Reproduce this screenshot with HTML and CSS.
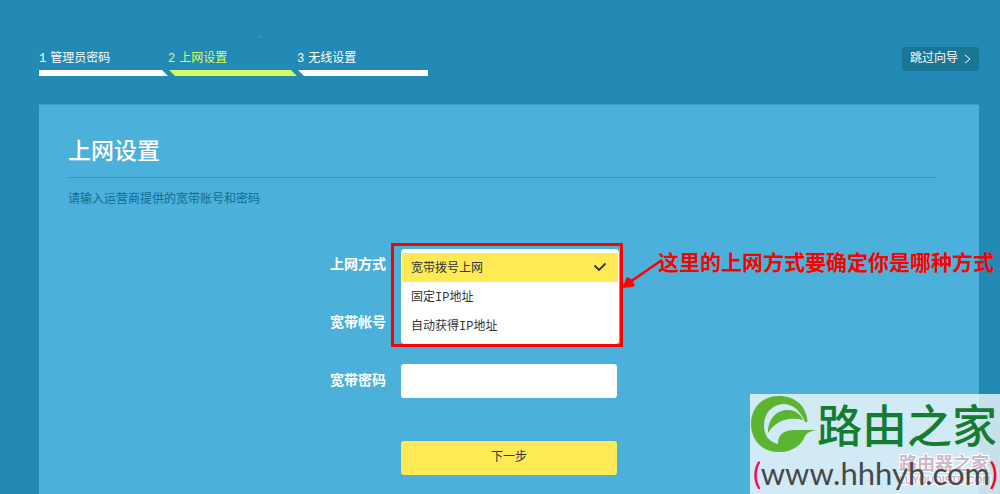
FILE: index.html
```html
<!DOCTYPE html>
<html lang="zh-CN">
<head>
<meta charset="utf-8">
<meta name="viewport" content="width=device-width, initial-scale=1">
<title>上网设置</title>
<link rel="stylesheet" href="styles.css">
</head>
<body>
<div class="page">
  <span class="speck"></span>
  <header class="top">
    <ol class="steps">
      <li class="step"><span class="step-name"><span>1</span><span>管理员密码</span></span><span class="bar bar-first"></span></li>
      <li class="step active" aria-current="step"><span class="step-name"><span>2</span><span>上网设置</span></span><span class="bar"></span></li>
      <li class="step"><span class="step-name"><span>3</span><span>无线设置</span></span><span class="bar bar-last"></span></li>
    </ol>
    <button class="skip" type="button">跳过向导
      <svg width="7" height="10" viewBox="0 0 7 10" aria-hidden="true"><path d="M1 1l5 4-5 4" fill="none" stroke="currentColor"/></svg>
    </button>
  </header>

  <main class="card">
    <h1 class="title">上网设置</h1>
    <p class="hint">请输入运营商提供的宽带账号和密码</p>
    <form class="form">
      <label class="label" for="mode">上网方式</label>
      <div class="field">
        <div class="dropdown">
          <select class="options" id="mode" size="3">
            <option selected>宽带拨号上网</option>
            <option>固定IP地址</option>
            <option>自动获得IP地址</option>
          </select>
          <svg class="check" width="14" height="10" viewBox="0 0 14 10" aria-hidden="true"><path d="M1.500 3.500l4.500 4.500 6.500-6.500" fill="none" stroke="#333" stroke-width="1.800"/></svg>
        </div>
        <div class="marker"></div>
        <div class="note">
          <svg class="arrow" width="42" height="34" viewBox="0 0 42 34" aria-hidden="true"><path d="M40 3L8 25" stroke="#f00" stroke-width="2.500"/><path d="M0 31L5 20l4 2 4 6-2 2z" fill="#f00"/></svg>
          <span class="note-text">这里的上网方式要确定你是哪种方式</span>
        </div>
      </div>
      <label class="label" for="account">宽带帐号</label>
      <div class="field"><input class="input" id="account" type="text"></div>
      <label class="label" for="password">宽带密码</label>
      <div class="field"><input class="input" id="password" type="password"></div>
      <button class="next" type="button">下一步</button>
    </form>
  </main>

  <aside class="watermark">
    <div class="stamp"><span class="stamp-name">路由器之家</span><span class="stamp-url">LUYOUQISTD.COM</span></div>
    <div class="brand">
      <svg class="logo" width="67" height="57" viewBox="0 0 67 57" aria-hidden="true">
        <path fill="#5cb531" d="M57.500 27C57 11 45 1 29 1C12 1 1 13 1 29C1 45 12 57 29 57C44 57 52 49 55 41Q58 36 67 35L45 35C33 35 28 40 28 49C19 47 14 40 14 31C14 18 22 10 33 9C44 9 51 17 55 27Z"/>
        <path fill="#5cb531" d="M18 38C18 23 27 15 38 15C46 15 51 20 53 25C38 21 25 26 18 38Z"/>
      </svg>
      <span class="brand-name">路由之家</span>
    </div>
    <div class="url"><span class="paren-open">(</span><span>www.hhhyh.com</span><span class="paren-close">)</span></div>
  </aside>
</div>
</body>
</html>
```
FILE: styles.css
```css
* { box-sizing: border-box; }
body {
  margin: 0;
  background: #2389b5;
  color: #fff;
  font: 12px/16px "Liberation Mono", "Noto Sans CJK SC", sans-serif;
}
button, input, select { font: inherit; }

.page {
  position: relative;
  display: flex;
  flex-direction: column;
  height: 100vh;
  padding: 47px 21px 0 39px;
  overflow: hidden;
}
.speck {
  position: absolute;
  top: 35px;
  left: 259px;
  width: 3px;
  height: 3px;
  border-radius: 50%;
  background: #8a7d87;
}

.top {
  display: flex;
  flex: none;
  justify-content: space-between;
  align-items: flex-start;
  height: 57px;
}
.steps {
  display: flex;
  margin: 0;
  padding: 4px 0 0;
  list-style: none;
}
.step { width: 129px; }
.step:last-child { width: 131px; }
.step.active { color: #d3ff62; }
.step-name { display: flex; gap: 4px; }
.bar {
  display: block;
  height: 6px;
  margin: 3px 0 0;
  background: currentColor;
  clip-path: polygon(1px 0, 123px 0, 129px 6px, 7px 6px);
}
.bar-first { clip-path: polygon(0 0, 123px 0, 129px 6px, 0 6px); }
.bar-last { clip-path: polygon(1px 0, 100% 0, 100% 6px, 7px 6px); }
.skip {
  display: flex;
  align-items: center;
  gap: 6px;
  height: 24px;
  padding: 0 8px;
  border: 0;
  border-radius: 3px;
  background: #1b7594;
  color: #fff;
}

.card {
  flex: 1 0 auto;
  padding: 33px 42px 0 29px;
  border-top: 1px solid #3a9cc9;
  background: #4bb0da;
}
.title {
  margin: 0;
  padding-bottom: 9px;
  border-bottom: 1px solid #3096c2;
  font-size: 23px;
  font-weight: 500;
  line-height: 30px;
}
.hint {
  margin: 14px 0 40px;
  color: #0f6b91;
}

.form {
  display: grid;
  grid-template-columns: 318px 216px;
  column-gap: 15px;
  row-gap: 24px;
  align-items: center;
}
.label {
  font-size: 14px;
  font-weight: bold;
  text-align: right;
}
.field { position: relative; height: 34px; }
.input {
  width: 100%;
  height: 34px;
  padding: 0 10px;
  border: 0;
  border-radius: 3px;
  background: #fff;
}
.dropdown {
  position: absolute;
  z-index: 1;
  top: 1px;
  left: 0;
  width: 218px;
  padding: 4px 1px;
  border-radius: 4px;
  background: #fff;
}
.options {
  display: block;
  width: 100%;
  height: 87px;
  padding: 0;
  border: 0;
  outline: 0;
  overflow: hidden;
  background: #fff;
  color: #333;
}
.options option {
  height: 29px;
  min-height: 29px;
  padding: 5px 9px 0;
  color: #333;
}
.options option:checked { background: #ffe955 linear-gradient(#ffe955, #ffe955); }
.check { position: absolute; top: 13px; right: 12px; }
.marker {
  position: absolute;
  z-index: 2;
  top: -5px;
  left: -10px;
  width: 232px;
  height: 104px;
  border: 3px solid #f00;
  pointer-events: none;
}
.note {
  position: absolute;
  z-index: 3;
  top: 0;
  left: 257px;
  color: #f00;
  white-space: nowrap;
}
.note-text {
  font: bold 21px/30px "Liberation Serif", "Noto Sans CJK SC", serif;
}
.arrow { position: absolute; top: 9px; left: -36px; }
.next {
  grid-column: 2;
  height: 34px;
  margin-top: 19px;
  border: 0;
  border-radius: 3px;
  background: #ffe955;
  color: #333;
}

.watermark {
  position: absolute;
  z-index: 4;
  right: 0;
  bottom: 0;
  width: 250px;
  height: 100px;
  background: rgba(255, 255, 255, .74);
}
.brand { display: flex; height: 60px; }
.logo { flex: none; margin-top: 1px; }
.brand-name {
  color: #167c32;
  font: 500 45px/60px "Noto Sans CJK SC", sans-serif;
  white-space: nowrap;
}
.url {
  position: relative;
  padding-left: 3px;
  color: #484848;
  font: 31px/38px Lato, sans-serif;
  white-space: nowrap;
}
.paren-open { color: #f06; }
.paren-close { color: #f01; }
.stamp {
  position: absolute;
  top: 60px;
  left: 149px;
  display: flex;
  flex-direction: column;
  color: #c9b9c9;
  font-family: "Liberation Sans", "Noto Sans CJK SC", sans-serif;
  font-weight: bold;
  text-shadow: 1px 1px #fff, -1px -1px #fff, 1px -1px #fff, -1px 1px #fff;
}
.stamp-name { font-size: 18px; line-height: 20px; }
.stamp-url { font-size: 10px; line-height: 14px; }
```
